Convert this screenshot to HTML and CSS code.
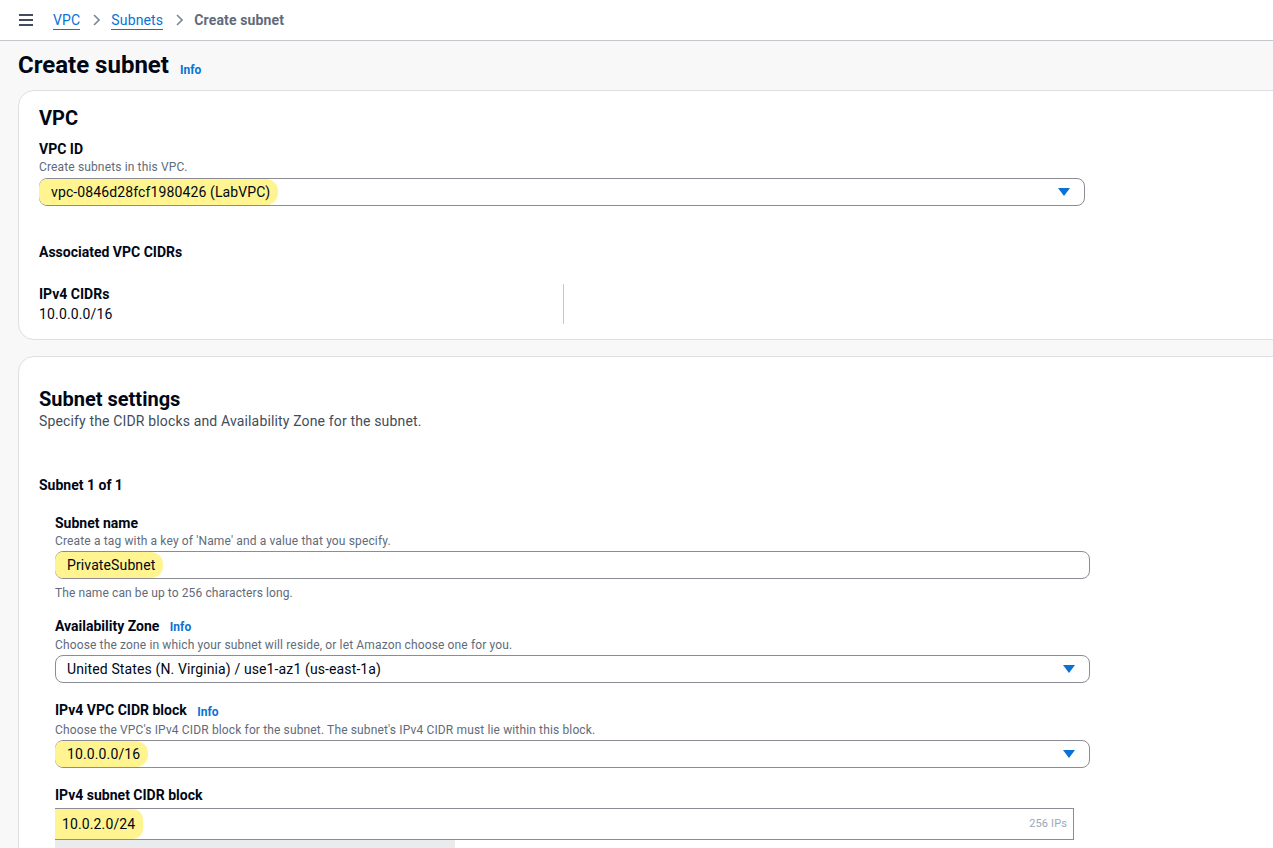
FILE: index.html
```html
<!DOCTYPE html>
<html lang="en">
<head>
    <meta charset="UTF-8">
    <meta name="viewport" content="width=device-width, initial-scale=1.0">
    <title>Create subnet | VPC Console</title>
    <link rel="stylesheet" href="styles.css">
</head>
<body>

<!-- Top breadcrumb bar -->
<div class="topbar">
    <svg class="menu-icon" width="16" height="14" viewBox="0 0 16 14">
        <path d="M1 2h14M1 7h14M1 12h14" stroke="#414d5c" stroke-width="2" fill="none"/>
    </svg>
    <nav class="crumbs">
        <a href="#" class="crumb-link">VPC</a>
        <svg class="chev" width="8" height="12" viewBox="0 0 8 12"><path d="M2 1l5 5-5 5" stroke="#7d8998" stroke-width="1.6" fill="none"/></svg>
        <a href="#" class="crumb-link">Subnets</a>
        <svg class="chev" width="8" height="12" viewBox="0 0 8 12"><path d="M2 1l5 5-5 5" stroke="#7d8998" stroke-width="1.6" fill="none"/></svg>
        <span class="crumb-current">Create subnet</span>
    </nav>
</div>

<div class="content">
    <h1 class="page-title">Create subnet <a href="#" class="info">Info</a></h1>

    <!-- VPC card -->
    <div class="card card-vpc">
        <h2 class="card-title">VPC</h2>
        <div class="form">
            <div class="label">VPC ID</div>
            <div class="desc">Create subnets in this VPC.</div>
            <div class="select">
                <span class="hl">vpc-0846d28fcf1980426 (LabVPC)</span>
                <svg class="caret" width="12" height="8" viewBox="0 0 12 8"><path d="M0 0h12L6 8z" fill="#0972d3"/></svg>
            </div>

            <div class="label assoc">Associated VPC CIDRs</div>
            <div class="kv">
                <div class="kv-col">
                    <div class="label">IPv4 CIDRs</div>
                    <div class="value">10.0.0.0/16</div>
                </div>
                <div class="kv-col kv-sep"></div>
            </div>
        </div>
    </div>

    <!-- Subnet settings card -->
    <div class="card card-settings">
        <h2 class="card-title">Subnet settings</h2>
        <div class="card-sub">Specify the CIDR blocks and Availability Zone for the subnet.</div>

        <div class="label subnet-count">Subnet 1 of 1</div>

        <div class="subnet">
            <div class="label">Subnet name</div>
            <div class="desc">Create a tag with a key of 'Name' and a value that you specify.</div>
            <div class="input">
                <span class="hl">PrivateSubnet</span>
            </div>
            <div class="help">The name can be up to 256 characters long.</div>

            <div class="label field">Availability Zone <a href="#" class="info">Info</a></div>
            <div class="desc">Choose the zone in which your subnet will reside, or let Amazon choose one for you.</div>
            <div class="select">
                <span class="plain">United States (N. Virginia) / use1-az1 (us-east-1a)</span>
                <svg class="caret" width="12" height="8" viewBox="0 0 12 8"><path d="M0 0h12L6 8z" fill="#0972d3"/></svg>
            </div>

            <div class="label field">IPv4 VPC CIDR block <a href="#" class="info">Info</a></div>
            <div class="desc">Choose the VPC's IPv4 CIDR block for the subnet. The subnet's IPv4 CIDR must lie within this block.</div>
            <div class="select">
                <span class="hl">10.0.0.0/16</span>
                <svg class="caret" width="12" height="8" viewBox="0 0 12 8"><path d="M0 0h12L6 8z" fill="#0972d3"/></svg>
            </div>

            <div class="label field">IPv4 subnet CIDR block</div>
            <div class="cidr-input">
                <span class="hl hl-square">10.0.2.0/24</span>
                <span class="ips">256 IPs</span>
            </div>
            <div class="cidr-bar"></div>
        </div>
    </div>
</div>

</body>
</html>
```

FILE: styles.css
```css
body {
    margin: 0;
    font-family: Roboto, "Liberation Sans", sans-serif;
    color: #000716;
    background: #f8f8f8;
    overflow: hidden;
    height: 848px;
}
a {
    text-decoration: none;
}
.topbar {
    height: 40px;
    background: #ffffff;
    border-bottom: 1px solid #c6c6cd;
    display: flex;
    align-items: center;
    padding-left: 18px;
}
.menu-icon {
    margin-right: 19px;
}
.crumbs {
    display: flex;
    align-items: center;
    font-size: 14px;
    letter-spacing: 0.15px;
}
.crumb-link {
    color: #0972d3;
    border-bottom: 1px solid #0972d3;
    line-height: 18px;
}
.chev {
    margin: 0 11px 0 12px;
}
.crumb-current {
    color: #5f6b7a;
    font-weight: bold;
}
.content {
    padding-left: 18px;
}
.page-title {
    margin: 0;
    height: 49px;
    font-size: 24px;
    line-height: 48px;
    font-weight: bold;
    color: #000716;
}
.info {
    font-size: 12px;
    color: #0972d3;
    font-weight: bold;
    margin-left: 7px;
    vertical-align: middle;
}
.page-title .info {
    margin-left: 5px;
    vertical-align: baseline;
    position: relative;
    top: 1px;
}
.card {
    background: #ffffff;
    border: 1px solid #dedee3;
    border-radius: 16px;
    margin-right: -30px;
    padding: 0 20px;
}
.card-vpc {
    padding-top: 15px;
    padding-bottom: 15px;
    margin-bottom: 16px;
}
.card-settings {
    padding-top: 29px;
    height: 600px;
}
.card-title {
    margin: 0;
    font-size: 20px;
    line-height: 24px;
    font-weight: bold;
}
.card-sub {
    font-size: 14px;
    line-height: 20px;
    color: #414d5c;
    letter-spacing: 0.15px;
}
.form {
    width: 1046px;
    padding-top: 10px;
}
.label {
    font-size: 14px;
    font-weight: bold;
    line-height: 18px;
}
.desc {
    font-size: 12px;
    line-height: 16px;
    color: #5f6b7a;
    margin-top: 1px;
    letter-spacing: 0.14px;
}
.help {
    font-size: 12px;
    line-height: 16px;
    color: #5f6b7a;
    margin-top: 6px;
    letter-spacing: 0.1px;
}
.select, .input {
    height: 26px;
    border: 1px solid #8c8c94;
    border-radius: 8px;
    margin-top: 2px;
    display: flex;
    align-items: center;
    justify-content: space-between;
    font-size: 14px;
    letter-spacing: 0.12px;
}
.form .select {
    margin-top: 3px;
}
.hl {
    background: #fff48f;
    height: 26px;
    line-height: 26px;
    padding: 0 8px 0 12px;
    border-radius: 8px 12px 12px 8px;
    margin-left: -1px;
}
.plain {
    padding-left: 11px;
}
.caret {
    margin-right: 14px;
}
.assoc {
    margin-top: 36px;
    line-height: 20px;
}
.kv {
    display: grid;
    grid-template-columns: 524px 1fr;
    margin-top: 22px;
}
.kv .label {
    line-height: 20px;
}
.value {
    font-size: 14px;
    line-height: 20px;
    letter-spacing: 0.15px;
}
.kv-sep {
    border-left: 1px solid #c6c6cd;
}
.card-settings .card-title {
    margin-top: 1px;
}
.subnet-count {
    margin-top: 44px;
    line-height: 20px;
}
.subnet {
    width: 1035px;
    padding: 19px 0 0 16px;
}
.field {
    margin-top: 18px;
}
.help + .field {
    margin-top: 16px;
}
.cidr-input {
    width: 1017px;
    height: 30px;
    border: 1px solid #8c8c94;
    margin-top: 4px;
    display: flex;
    align-items: center;
    justify-content: space-between;
    font-size: 14px;
    letter-spacing: 0.12px;
}
.hl-square {
    height: 30px;
    line-height: 30px;
    padding-left: 7px;
    border-radius: 0 10px 10px 0;
}
.ips {
    font-size: 11px;
    color: #9ba7b6;
    margin-right: 6px;
}
.cidr-bar {
    width: 400px;
    height: 12px;
    background: #e9ebed;
}
```
